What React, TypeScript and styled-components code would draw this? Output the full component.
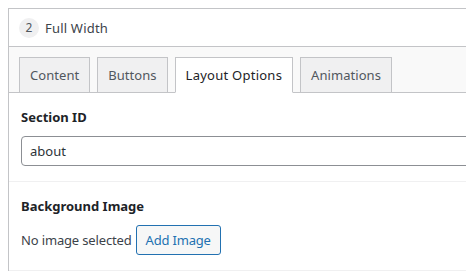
import styled, { createGlobalStyle } from "styled-components";

const GlobalStyle = createGlobalStyle`
  html, body {
    overflow: hidden;
  }
  body {
    margin: 0;
    background: #ffffff;
    font-family: "Noto Sans", "Open Sans", sans-serif;
    font-size: 13px;
    color: #3c434a;
  }
`;

const tabs = ["Content", "Buttons", "Layout Options", "Animations"];

export default function App() {
  return (
    <>
      <GlobalStyle />
      <Page>
        <Panel>
          <Header>
            <Badge>2</Badge>
            <Title>Full Width</Title>
          </Header>
          <TabBar>
            {tabs.map((t) => (
              <Tab key={t} $active={t === "Layout Options"}>
                {t}
              </Tab>
            ))}
          </TabBar>
          <Field>
            <Label>Section ID</Label>
            <Input defaultValue="about" />
          </Field>
          <Field>
            <Label>Background Image</Label>
            <Row>
              <Note>No image selected</Note>
              <Button>Add Image</Button>
            </Row>
          </Field>
        </Panel>
      </Page>
    </>
  );
}

const Page = styled.div`
  width: 100vw;
  height: 100vh;
  overflow: hidden;
  padding: 8px 0 0 8px;
  box-sizing: border-box;
`;

const Panel = styled.div`
  width: 640px;
  border-top: 1px solid #c3c4c7;
  border-left: 1px solid #c3c4c7;
  background: #fff;
`;

const Header = styled.div`
  height: 37px;
  display: flex;
  align-items: center;
  padding-left: 10px;
  border-bottom: 1px solid #c3c4c7;
`;

const Badge = styled.span`
  width: 20px;
  height: 20px;
  border-radius: 50%;
  background: #f0f0f1;
  display: flex;
  align-items: center;
  justify-content: center;
  font-size: 12px;
  color: #50575e;
  margin-right: 6px;
`;

const Title = styled.span`
  color: #3c434a;
  letter-spacing: 0.2px;
`;

const TabBar = styled.div`
  display: flex;
  align-items: flex-end;
  gap: 7px;
  padding: 10px 10px 0;
  background: #f9f9f9;
  border-bottom: 1px solid #c3c4c7;
`;

const Tab = styled.div<{ $active?: boolean }>`
  box-sizing: border-box;
  padding: 0 10px;
  display: flex;
  align-items: center;
  letter-spacing: ${(p) => (p.$active ? "0.25px" : "0.05px")};
  border: 1px solid #c3c4c7;
  margin-bottom: -1px;
  background: ${(p) => (p.$active ? "#ffffff" : "#f0f0f1")};
  color: ${(p) => (p.$active ? "#1d2327" : "#50575e")};
  height: 36px;
  border-bottom-color: ${(p) => (p.$active ? "#ffffff" : "#c3c4c7")};
`;

const Field = styled.div`
  padding: 15px 12px 15px;
  border-bottom: 1px solid #f0f0f1;
`;

const Label = styled.div`
  font-weight: 700;
  color: #1d2327;
  line-height: 18px;
  margin-bottom: 10px;
`;

const Input = styled.input`
  display: block;
  box-sizing: border-box;
  width: 100%;
  height: 30px;
  padding: 0 8px;
  border: 1px solid #8c8f94;
  border-radius: 4px;
  font: inherit;
  color: #2c3338;
  outline: none;
`;

const Row = styled.div`
  display: flex;
  align-items: center;
  gap: 4px;
`;

const Note = styled.span`
  color: #3c434a;
  letter-spacing: -0.15px;
`;

const Button = styled.button`
  height: 30px;
  padding: 0 9px;
  border: 1px solid #2271b1;
  border-radius: 3px;
  background: #f6f7f7;
  color: #2271b1;
  font: inherit;
  letter-spacing: -0.2px;
`;
